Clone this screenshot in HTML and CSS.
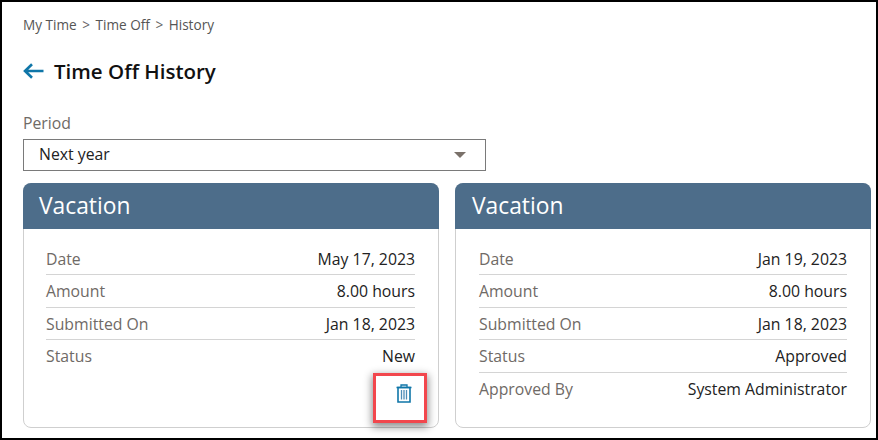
FILE: index.html
```html
<!DOCTYPE html>
<html lang="en">
<head>
<meta charset="utf-8">
<title>Time Off History</title>
<link rel="stylesheet" href="styles.css">
</head>
<body>
<div class="frame">
  <nav class="crumbs"><span>My Time</span><span class="sep">&gt;</span><span>Time Off</span><span class="sep">&gt;</span><span>History</span></nav>
  <header class="title">
    <svg class="back" width="21" height="16" viewBox="0 0 21 16"><path d="M20.5 8H2M9 1.2 2 8l7 6.8" fill="none" stroke="#0f76a8" stroke-width="2.6"/></svg>
    <h1>Time Off History</h1>
  </header>
  <label class="period-label">Period</label>
  <div class="select"><span>Next year</span><i class="caret"></i></div>
  <div class="cards">
    <section class="card">
      <h2>Vacation</h2>
      <dl class="rows">
        <div class="row"><dt>Date</dt><dd>May 17, 2023</dd></div>
        <div class="row"><dt>Amount</dt><dd>8.00 hours</dd></div>
        <div class="row"><dt>Submitted On</dt><dd>Jan 18, 2023</dd></div>
        <div class="row last"><dt>Status</dt><dd>New</dd></div>
      </dl>
      <div class="actions">
        <div class="highlight">
          <svg width="16" height="19" viewBox="0 0 16 19" fill="none" stroke="#0f76a8"><path d="M0.5 3.5h15M5 3.5V1h6v2.5" stroke-width="1.3"/><path d="M2 3.5h12v14.5H2z" stroke-width="1.6"/><path d="M5.5 6v9.5M8 6v9.5M10.5 6v9.5" stroke-width="1.3" stroke="#4f8db8"/></svg>
        </div>
      </div>
    </section>
    <section class="card card-second">
      <h2>Vacation</h2>
      <dl class="rows">
        <div class="row"><dt>Date</dt><dd>Jan 19, 2023</dd></div>
        <div class="row"><dt>Amount</dt><dd>8.00 hours</dd></div>
        <div class="row"><dt>Submitted On</dt><dd>Jan 18, 2023</dd></div>
        <div class="row"><dt>Status</dt><dd>Approved</dd></div>
        <div class="row last"><dt>Approved By</dt><dd>System Administrator</dd></div>
      </dl>
    </section>
  </div>
</div>
</body>
</html>
```
FILE: styles.css
```css
html, body { margin: 0; padding: 0; background: #fff; }
body { width: 878px; height: 440px; overflow: hidden; font-family: "Open Sans", sans-serif; }
.frame {
  box-sizing: border-box;
  width: 878px;
  height: 440px;
  border: 2px solid #000;
  padding: 0 5px 0 21px;
  display: flex;
  flex-direction: column;
}
.crumbs { display: flex; gap: 5.5px; margin-top: 13px; height: 19px; line-height: 19px; font-size: 13.6px; color: #555; }
.crumbs .sep { color: #666; }
.title { display: flex; align-items: center; gap: 10px; margin-top: 23px; height: 28px; }
.title h1 { margin: 0; font-size: 20.5px; font-weight: 600; color: #111; line-height: 28px; }
.period-label { margin-top: 28px; font-size: 15.8px; line-height: 20px; color: #6f6a66; }
.select {
  box-sizing: border-box;
  width: 463px;
  height: 32px;
  margin-top: 6px;
  border: 1px solid #7a7a7a;
  padding: 0 19px 2px 15px;
  display: flex;
  align-items: center;
  justify-content: space-between;
  font-size: 15.8px;
  color: #222;
}
.caret { width: 0; height: 0; border-left: 6px solid transparent; border-right: 6px solid transparent; border-top: 6px solid #7a716a; margin-top: 2px; }
.cards { display: flex; gap: 16px; margin-top: 12px; }
.card {
  box-sizing: border-box;
  flex: none;
  width: 416px;
  height: 245px;
  border: 1px solid #cfcfcf;
  border-radius: 8px;
  display: flex;
  flex-direction: column;
}
.card h2 {
  margin: -1px -1px 0;
  height: 46px;
  background: #4d6d8a;
  border-radius: 8px 8px 0 0;
  color: #fff;
  font-size: 22.8px;
  font-weight: 400;
  line-height: 46px;
  padding-left: 16px;
}
.card-second h2 { padding-left: 17px; }
.rows { margin: 14px 23px 0 22px; }
.card-second .rows { margin-left: 23px; }
.row {
  display: flex;
  justify-content: space-between;
  height: 32.4px;
  line-height: 32px;
  box-sizing: border-box;
  border-bottom: 1px solid #d4d4d4;
  font-size: 15.8px;
}
.row.last { border-bottom: 0; }
.row dt { color: #6f6a66; }
.row dd { margin: 0; color: #222; }
.actions { display: flex; justify-content: flex-end; margin: 0 11px 0 0; }
.highlight {
  box-sizing: border-box;
  width: 54px;
  height: 50px;
  border: 3px solid #f2474d;
  box-shadow: 0 3px 8px 1px rgba(0,0,0,.45);
  padding: 0 0 9px 8px;
  display: flex;
  align-items: center;
  justify-content: center;
}
```
